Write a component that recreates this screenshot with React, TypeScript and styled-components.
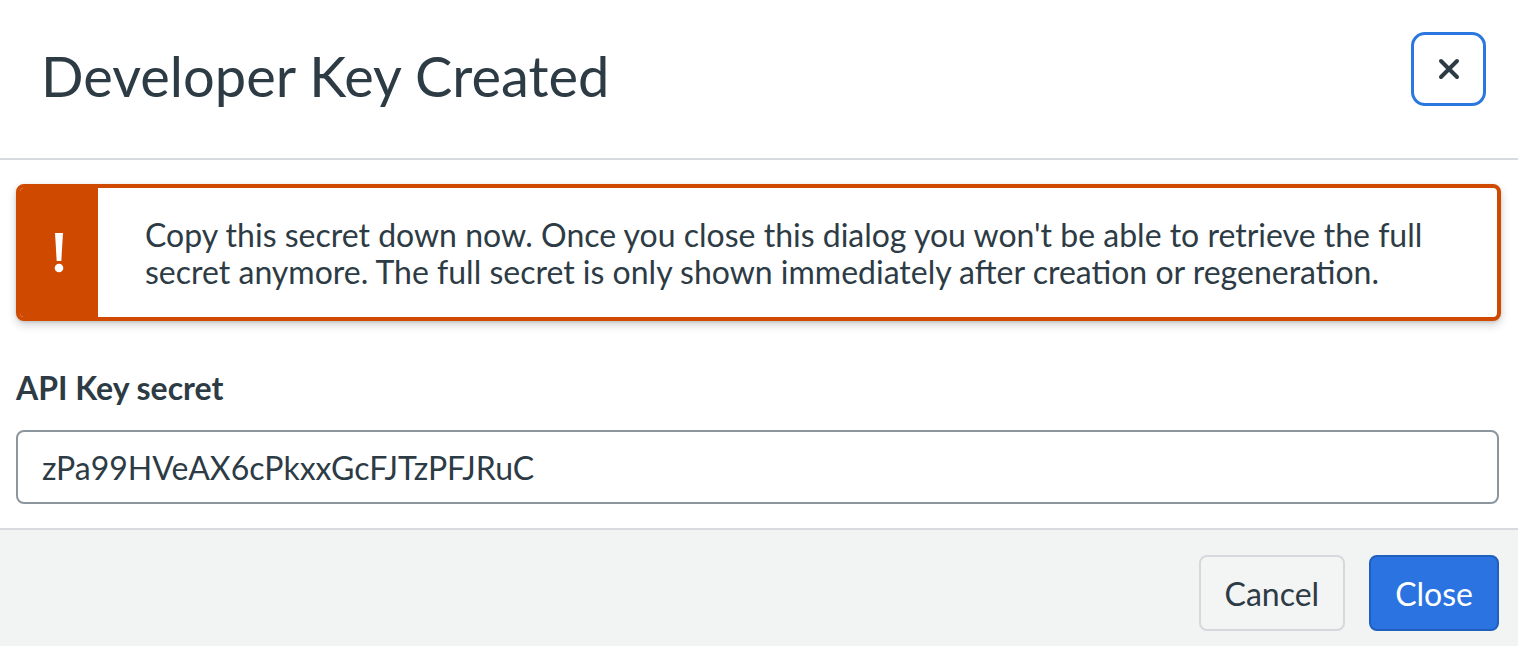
import styled, { createGlobalStyle } from "styled-components";

const GlobalStyle = createGlobalStyle`
  html, body {
    margin: 0;
    padding: 0;
    background: #fff;
  }
  body {
    font-family: Lato, "Noto Sans", sans-serif;
    color: #2d3b45;
  }
`;

const Dialog = styled.div`
  width: 1518px;
  height: 646px;
  display: flex;
  flex-direction: column;
  background: #fff;
  overflow: hidden;
`;

const Header = styled.header`
  flex-shrink: 0;
  height: 126px;
  display: flex;
  align-items: flex-start;
  justify-content: space-between;
  padding: 32px 32px 0 41px;
  border-bottom: 2px solid #d7dade;
`;

const Title = styled.h1`
  margin: 10px 0 0;
  font-size: 56px;
  line-height: 1.2;
  font-weight: 400;
  color: #2d3b45;
`;

const IconButton = styled.button`
  width: 75px;
  height: 74px;
  border: 3px solid #2b77e0;
  border-radius: 14px;
  background: #fff;
  display: flex;
  align-items: center;
  justify-content: center;
  padding: 0;
  cursor: pointer;
`;

const Body = styled.div`
  flex-shrink: 0;
  display: flex;
  flex-direction: column;
  padding: 24px 17px 0 16px;
`;

const Alert = styled.div`
  display: flex;
  height: 137px;
  box-sizing: border-box;
  border: 4px solid #cf4a00;
  border-radius: 8px;
  background: #fff;
  box-shadow: 0 4px 10px rgba(0, 0, 0, 0.18), 0 1px 3px rgba(0, 0, 0, 0.12);
  overflow: hidden;
`;

const AlertIcon = styled.div`
  width: 78px;
  flex-shrink: 0;
  background: #cf4a00;
  display: flex;
  align-items: center;
  justify-content: center;
`;

const AlertText = styled.p`
  margin: 0;
  padding: 0 40px 0 47px;
  align-self: center;
  font-size: 32px;
  line-height: 37px;
  color: #2d3b45;
`;

const Field = styled.div`
  display: flex;
  flex-direction: column;
  margin-top: 48px;
  padding-right: 2px;
`;

const Label = styled.label`
  font-size: 32px;
  font-weight: 700;
  line-height: 38px;
  color: #2d3b45;
`;

const Input = styled.input`
  margin-top: 23px;
  height: 74px;
  box-sizing: border-box;
  border: 2px solid #8b969e;
  border-radius: 8px;
  padding: 0 24px;
  font-family: Lato, "Noto Sans", sans-serif;
  font-size: 32px;
  color: #2d3b45;
  background: #fff;
  outline: none;
`;

const Footer = styled.footer`
  flex: 1;
  margin-top: 24px;
  border-top: 2px solid #d7dade;
  background: #f2f3f3;
  display: flex;
  align-items: flex-start;
  justify-content: flex-end;
  gap: 24px;
  padding: 25px 19px 0 0;
`;

const Button = styled.button<{ $primary?: boolean }>`
  height: 76px;
  padding: 0 24px;
  border-radius: 8px;
  font-family: Lato, "Noto Sans", sans-serif;
  font-size: 32px;
  cursor: pointer;
  border: 2px solid ${(p) => (p.$primary ? "#1f5fbd" : "#d5d9dd")};
  background: ${(p) => (p.$primary ? "#2a73e0" : "#f3f4f4")};
  color: ${(p) => (p.$primary ? "#fff" : "#2d3b45")};
`;

export default function App() {
  return (
    <>
      <GlobalStyle />
      <Dialog>
        <Header>
          <Title>Developer Key Created</Title>
          <IconButton aria-label="Close">
            <svg width="22" height="22" viewBox="0 0 22 22">
              <path
                d="M3 3 L19 19 M19 3 L3 19"
                stroke="#2d3b45"
                strokeWidth="4"
                strokeLinecap="round"
              />
            </svg>
          </IconButton>
        </Header>
        <Body>
          <Alert>
            <AlertIcon>
              <svg width="12" height="40" viewBox="0 0 12 40">
                <path d="M2 0 H10 L8.3 28 H3.7 Z" fill="#fff" />
                <circle cx="6" cy="35" r="4.3" fill="#fff" />
              </svg>
            </AlertIcon>
            <AlertText>
              Copy this secret down now. Once you close this dialog you won't be
              able to retrieve the full secret anymore. The full secret is only
              shown immediately after creation or regeneration.
            </AlertText>
          </Alert>
          <Field>
            <Label htmlFor="secret">API Key secret</Label>
            <Input id="secret" readOnly value="zPa99HVeAX6cPkxxGcFJTzPFJRuC" />
          </Field>
        </Body>
        <Footer>
          <Button>Cancel</Button>
          <Button $primary>Close</Button>
        </Footer>
      </Dialog>
    </>
  );
}
